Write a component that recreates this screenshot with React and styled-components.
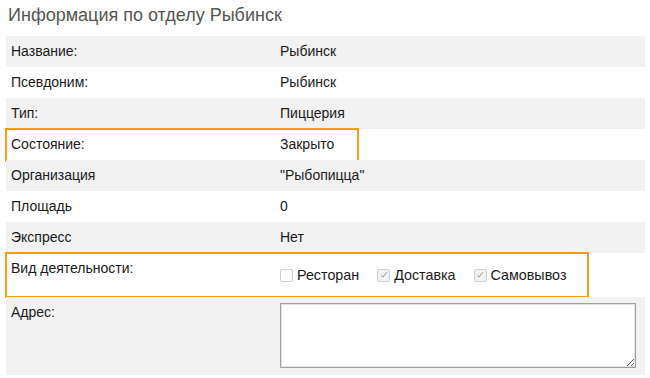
import React from "react";
import styled, { createGlobalStyle } from "styled-components";

const Global = createGlobalStyle`
  html, body { margin: 0; padding: 0; background: #fff; }
  body { font-family: "Liberation Sans", Arial, Helvetica, sans-serif; color: #1a1a1a; }
`;

const Page = styled.div`
  width: 650px;
  height: 378px;
  overflow: hidden;
`;

const Title = styled.h2`
  margin: 0;
  height: 36px;
  box-sizing: border-box;
  padding: 4px 8px 0;
  font-size: 18px;
  font-weight: normal;
  line-height: 22px;
  color: #555;
`;

const Table = styled.div`
  margin-left: 6px;
  width: 639px;
`;

const Row = styled.div`
  position: relative;
  display: grid;
  grid-template-columns: 274px 1fr;
  min-height: ${(p) => p.$h || 31}px;
  background: ${(p) => (p.$alt ? "#f2f2f2" : "#fff")};
`;

const Label = styled.div`
  padding: 7px 5px 0;
  font-size: 14px;
  line-height: 16px;
  color: #1a1a1a;
`;

const Value = styled.div`
  padding: ${(p) => p.$pad || "7px 0 0"};
  font-size: 14px;
  line-height: 16px;
  color: #1a1a1a;
`;

const Highlight = styled.div`
  position: absolute;
  left: -1px;
  top: ${(p) => p.$top}px;
  bottom: ${(p) => p.$bottom}px;
  width: ${(p) => p.$w}px;
  border: 2px solid #fb9a12;
  pointer-events: none;
`;

const Checks = styled.div`
  display: flex;
  align-items: center;
  gap: 18px;
`;

const CheckItem = styled.label`
  display: flex;
  align-items: center;
  gap: 4px;
  font-size: 14.3px;
  line-height: 18px;
  color: #1a1a1a;
`;

const Box = styled.span`
  width: 11px;
  height: 11px;
  border: 1px solid #cfcfcf;
  border-radius: 2px;
  background: ${(p) => (p.$checked ? "#f3f3f3" : "#fff")};
  display: inline-flex;
  align-items: center;
  justify-content: center;
  svg { display: block; }
`;

const TextArea = styled.textarea`
  display: block;
  box-sizing: border-box;
  width: 356px;
  height: 65px;
  margin: 0;
  border: 1px solid #a0a0a0;
  box-shadow: inset 0 0 0 1px #e4e4e4;
  background: #fff;
  resize: both;
  font-family: inherit;
`;

function Check({ checked, children }) {
  return (
    <CheckItem>
      <Box $checked={checked}>
        {checked && (
          <svg width="8" height="8" viewBox="0 0 8 8">
            <path d="M1.3 4.2 L3 6 L6.8 1.2" fill="none" stroke="#9a9a9a" strokeWidth="1" />
          </svg>
        )}
      </Box>
      {children}
    </CheckItem>
  );
}

const rows = [
  ["Название:", "Рыбинск"],
  ["Псевдоним:", "Рыбинск"],
  ["Тип:", "Пиццерия"],
  ["Состояние:", "Закрыто", "state"],
  ["Организация", "\"Рыбопицца\""],
  ["Площадь", "0"],
  ["Экспресс", "Нет"],
];

export default function App() {
  return (
    <Page>
      <Global />
      <Title>Информация по отделу Рыбинск</Title>
      <Table>
        {rows.map(([l, v, mark], i) => (
          <Row key={l} $alt={i % 2 === 0}>
            <Label>{l}</Label>
            <Value>{v}</Value>
            {mark && <Highlight $top={-1} $bottom={-2} $w={350} />}
          </Row>
        ))}
        <Row $h={44}>
          <Label>Вид деятельности:</Label>
          <Value $pad="13px 0 0 0">
            <Checks>
              <Check>Ресторан</Check>
              <Check checked>Доставка</Check>
              <Check checked>Самовывоз</Check>
            </Checks>
          </Value>
          <Highlight $top={-1} $bottom={-1} $w={580} />
        </Row>
        <Row $h={78} $alt>
          <Label>Адрес:</Label>
          <Value $pad="6px 0 0">
            <TextArea />
          </Value>
        </Row>
      </Table>
    </Page>
  );
}
